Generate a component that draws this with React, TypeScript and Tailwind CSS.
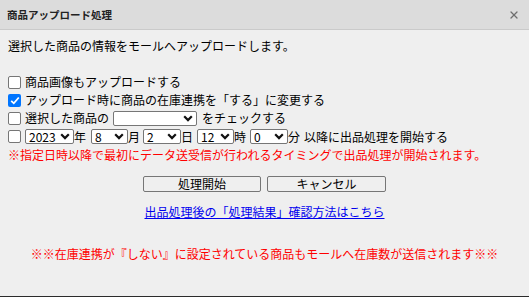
import { X } from "lucide-react";

function Chevron() {
  return (
    <svg width="10" height="7" viewBox="0 0 10 7" className="shrink-0">
      <path d="M1.2 1.3 L5 5.1 L8.8 1.3" fill="none" stroke="#111" strokeWidth="2.2" />
    </svg>
  );
}

function Select({ value, w }: { value: string; w: string }) {
  return (
    <div className={`${w} h-[15px] bg-white border border-[#767676] rounded-[2px] flex items-center justify-between pl-[3px] pr-[3px] text-[12px] leading-none text-black`}>
      <span>{value}</span>
      <Chevron />
    </div>
  );
}

function Check({ checked = false }: { checked?: boolean }) {
  if (checked) {
    return (
      <div className="w-[13px] h-[13px] rounded-[2px] bg-[#0075ff] flex items-center justify-center shrink-0">
        <svg width="10" height="9" viewBox="0 0 10 9">
          <path d="M1.2 4.8 L3.8 7.3 L8.8 1.5" fill="none" stroke="#fff" strokeWidth="1.8" />
        </svg>
      </div>
    );
  }
  return <div className="w-[13px] h-[13px] rounded-[2px] bg-white border border-[#767676] shrink-0" />;
}

export default function App() {
  return (
    <div
      className="w-[529px] h-[297px] bg-[#efefef] flex flex-col border-b border-[#2b2b2b] overflow-hidden text-[12px] text-black"
      style={{ fontFamily: '"Noto Sans CJK JP", "Noto Sans", sans-serif' }}
    >
      {/* Title bar */}
      <div className="h-[30px] shrink-0 bg-[#dcdcdc] border-b border-[#cacaca] flex items-center justify-between pl-[7px] pr-[9px]">
        <span className="text-[10.5px] font-bold text-[#222]">商品アップロード処理</span>
        <X size={12} strokeWidth={2.6} className="text-[#6f6f6f]" />
      </div>

      {/* Body */}
      <div className="px-[8px] leading-[18px]">
        <p className="mt-[7px]">選択した商品の情報をモールへアップロードします。</p>

        <div className="mt-[18px] flex flex-col">
          <label className="h-[18px] flex items-center gap-[4px]">
            <Check />
            <span>商品画像もアップロードする</span>
          </label>
          <label className="h-[18px] flex items-center gap-[4px]">
            <Check checked />
            <span>アップロード時に商品の在庫連携を「する」に変更する</span>
          </label>
          <label className="h-[18px] flex items-center gap-[4px]">
            <Check />
            <span>選択した商品の</span>
            <Select value="" w="w-[84px]" />
            <span className="ml-[1px]">をチェックする</span>
          </label>
          <label className="h-[19px] flex items-center">
            <Check />
            <div className="ml-[4px]"><Select value="2023" w="w-[49px]" /></div>
            <span>年</span>
            <div className="ml-[5px]"><Select value="8" w="w-[37px]" /></div>
            <span>月</span>
            <div className="ml-[3px]"><Select value="2" w="w-[38px]" /></div>
            <span>日</span>
            <div className="ml-[4px]"><Select value="12" w="w-[37px]" /></div>
            <span>時</span>
            <div className="ml-[4px]"><Select value="0" w="w-[38px]" /></div>
            <span>分</span>
            <span className="ml-[4px]">以降に出品処理を開始する</span>
          </label>
          <p className="h-[18px] text-[#ff0000]">
            ※指定日時以降で最初にデータ送受信が行われるタイミングで出品処理が開始されます。
          </p>
        </div>

        <div className="mt-[12px] flex justify-center gap-[6px]">
          <button className="w-[118px] h-[16px] border border-[#767676] rounded-[2px] bg-[#efefef] text-[12px] leading-none flex items-center justify-center">
            処理開始
          </button>
          <button className="w-[119px] h-[16px] border border-[#767676] rounded-[2px] bg-[#efefef] text-[12px] leading-none flex items-center justify-center">
            キャンセル
          </button>
        </div>

        <div className="mt-[11px] flex justify-center">
          <a href="#" className="text-[#0000ee] underline">
            出品処理後の「処理結果」確認方法はこちら
          </a>
        </div>

        <p className="mt-[24px] text-center text-[#ff0000]">
          ※※在庫連携が『しない』に設定されている商品もモールへ在庫数が送信されます※※
        </p>
      </div>
    </div>
  );
}
